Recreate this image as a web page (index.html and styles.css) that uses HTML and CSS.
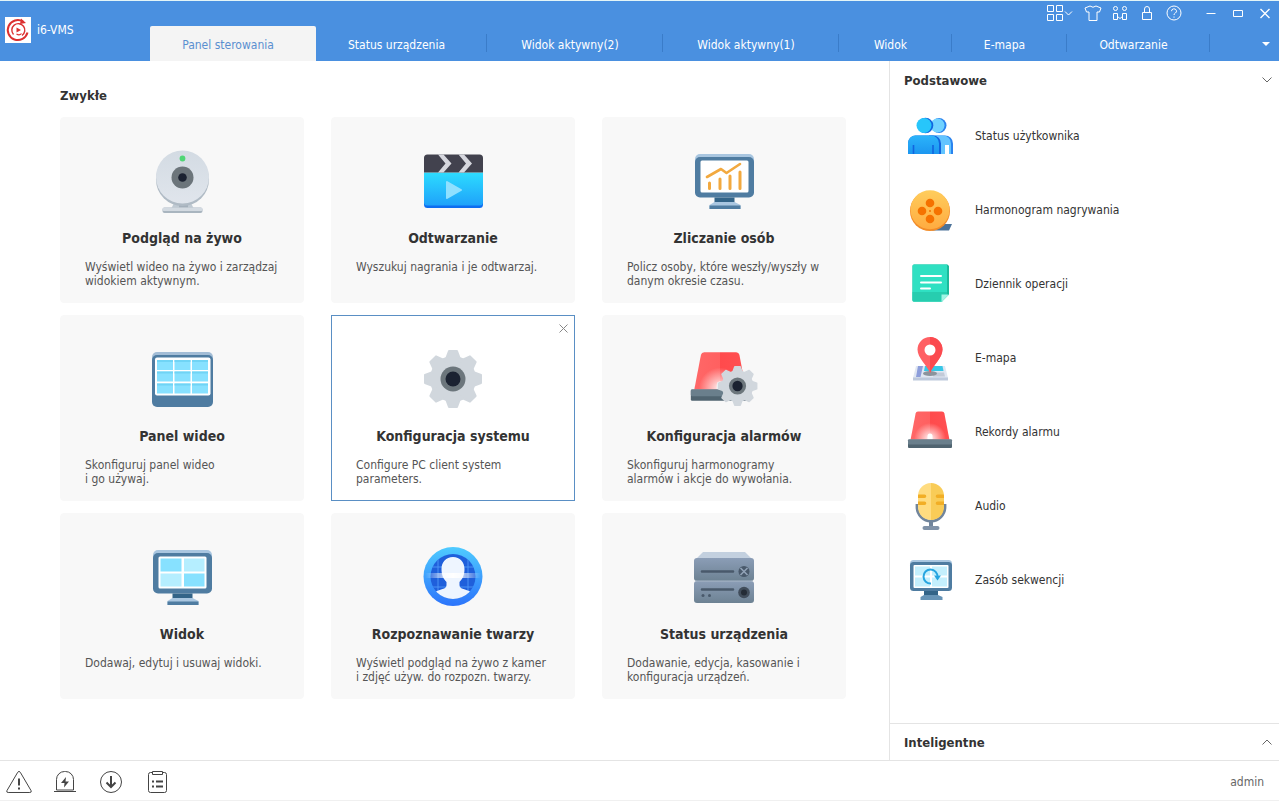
FILE: index.html
```html
<!DOCTYPE html>
<html lang="pl">
  <head>
    <meta charset="UTF-8" />
    <meta name="viewport" content="width=device-width, initial-scale=1.0" />
    <title>i6-VMS</title>
    <link rel="stylesheet" href="styles.css">
  </head>
  <body>
    <!-- shared shapes -->
    <svg class="defs" width="0" height="0" aria-hidden="true">
      <defs>
        <linearGradient id="g-cam" x1="0" y1="0" x2="0" y2="1"><stop offset="0" stop-color="#d3dbe3" /><stop offset="1" stop-color="#e0e5ec" /></linearGradient>
        <linearGradient id="g-clap" x1="0" y1="0" x2="0" y2="1"><stop offset="0" stop-color="#2ddcff" /><stop offset="1" stop-color="#1fa2fa" /></linearGradient>
        <linearGradient id="g-blue" x1="0" y1="0" x2="0" y2="1"><stop offset="0" stop-color="#4fcbff" /><stop offset="1" stop-color="#2c74fb" /></linearGradient>
        <linearGradient id="g-body" x1="0" y1="0" x2="0" y2="1"><stop offset="0" stop-color="#2bb4fa" /><stop offset="1" stop-color="#1c96f0" /></linearGradient>
        <linearGradient id="g-film" x1="0" y1="0" x2="0" y2="1"><stop offset="0" stop-color="#ffcd5c" /><stop offset="1" stop-color="#ffab40" /></linearGradient>
        <linearGradient id="g-server" x1="0" y1="0" x2="0" y2="1"><stop offset="0" stop-color="#8b9db6" /><stop offset="1" stop-color="#6d8293" /></linearGradient>
        <linearGradient id="g-scan"><stop offset="0" stop-color="#fff" stop-opacity="0" /><stop offset=".5" stop-color="#fff" /><stop offset="1" stop-color="#fff" stop-opacity="0" /></linearGradient>
        <linearGradient id="g-red"><stop offset="0" stop-color="#ff6969" /><stop offset=".5" stop-color="#ff6060" /><stop offset=".5" stop-color="#ff4a4c" /><stop offset="1" stop-color="#ff5153" /></linearGradient>
        <radialGradient id="g-glow"><stop offset="0" stop-color="#fff" stop-opacity=".95" /><stop offset="1" stop-color="#fff" stop-opacity="0" /></radialGradient>
        <clipPath id="c-face"><circle cx="32" cy="31.500" r="22.500" /></clipPath>
        <clipPath id="c-beacon"><path d="M11 3.500h24q2 0 2.400 2l5 26H3.600l5-26q.4-2 2.400-2z" /></clipPath>
        <clipPath id="c-mic"><rect x="11" y="1" width="26" height="37" rx="13" /></clipPath>
        <symbol id="gear" viewBox="0 0 64 64">
          <g fill="#d1d7dd" stroke="#d1d7dd" stroke-width="2" stroke-linejoin="round">
            <circle cx="32" cy="32" r="22" />
            <path d="M28 4h8l3 8v40l-3 8h-8l-3-8V12z" />
            <path d="M28 4h8l3 8v40l-3 8h-8l-3-8V12z" transform="rotate(45 32 32)" />
            <path d="M28 4h8l3 8v40l-3 8h-8l-3-8V12z" transform="rotate(90 32 32)" />
            <path d="M28 4h8l3 8v40l-3 8h-8l-3-8V12z" transform="rotate(135 32 32)" />
          </g>
          <circle cx="32" cy="32" r="12.500" fill="#6c767c" />
          <circle cx="32" cy="32" r="7.500" fill="#1b2231" />
        </symbol>
        <symbol id="monitor" viewBox="0 0 64 64">
          <rect x="3" y="5" width="59" height="40" rx="5" fill="#a9c6e0" />
          <rect x="3" y="8" width="59" height="40.500" rx="5" fill="#4f7ca1" />
          <rect x="8.500" y="11.500" width="48" height="32" rx="1.500" fill="#fff" />
          <path d="M22.500 48.500h20v5h-20z" fill="#336488" />
          <path d="M22.500 53h20l6 3v4H17.500v-4z" fill="#a9c6e0" />
          <path d="M17.500 56.500h31V60h-31z" fill="#4f7ca1" />
        </symbol>
        <symbol id="beacon" viewBox="0 0 48 48">
          <g clip-path="url(#c-beacon)">
            <path d="M0 0h46v33H0z" fill="url(#g-red)" />
            <circle cx="23" cy="31" r="16" fill="url(#g-glow)" />
          </g>
          <path d="M20.500 31.500V28a2.500 2.500 0 0 1 5 0v3.500z" fill="#fff" />
          <rect x="1" y="31.500" width="44" height="8.500" rx="1" fill="#506470" />
          <rect x="1" y="31.500" width="44" height="5" rx="1" fill="#6a7f8c" />
        </symbol>
      </defs>
    </svg>

    <div class="app">
      <header class="topbar">
        <div class="brand">
          <svg class="brand-logo" viewBox="0 0 26 26" aria-hidden="true">
            <path d="M0 0h26v26H0z" fill="#fff" />
            <g fill="none" stroke="#dc3030" stroke-width="2">
              <path d="M22.500 15.500A10 10 0 1 1 18 4.500" />
              <path d="M8.500 17.500A6.500 6.500 0 1 1 17 18.500" stroke-width="1.400" />
              <path d="M11.500 17q3 2 5-.5" stroke-width="1.200" />
            </g>
            <path d="M16 1.500l5 4.500-6 1zM11.500 10.500l4.500 2.500-4.500 2.500z" fill="#dc3030" />
          </svg>
          <span>i6-VMS</span>
        </div>

        <div class="topbar-main">
          <div class="tools">
            <button class="tool tool-wide" aria-label="Układ">
              <svg width="26" height="16" viewBox="0 0 26 16"><path d="M.5.500h6v6h-6zM9.500.500h6v6h-6zM.5 9.500h6v6h-6zM9.500 9.500h6v6h-6zM18 6.500l3.500 3.500L25 6.500" /></svg>
            </button>
            <button class="tool" aria-label="Skórka">
              <svg width="18" height="16" viewBox="0 0 18 16"><path d="M6 1q3 2.500 6 0l5 2-1.500 4H13v8.500H5V7H2.500L1 3z" /></svg>
            </button>
            <button class="tool" aria-label="Użytkownicy">
              <svg width="16" height="16" viewBox="0 0 16 16"><circle cx="3.500" cy="3.500" r="2" /><circle cx="12.500" cy="3.500" r="2" /><path d="M1.500 8.500h4v6h-4zM10.500 8.500h4v6h-4zM5.500 11.500L8 13.500l2.500-2" /></svg>
            </button>
            <button class="tool" aria-label="Zablokuj">
              <svg width="12" height="16" viewBox="0 0 12 16"><path d="M1.500 7.500h9v7h-9zM3.500 7.500V4a2.500 2.500 0 0 1 5 0v3.500" /></svg>
            </button>
            <button class="tool" aria-label="Pomoc">
              <svg width="16" height="16" viewBox="0 0 16 16"><circle cx="8" cy="8" r="7" /><path d="M5.500 6.200a2.500 2.300 0 1 1 3.800 1.900Q8 8.800 8 10M8 11.500v1.200" /></svg>
            </button>
            <div class="window-buttons">
              <button class="tool" aria-label="Minimalizuj">
                <svg width="10" height="16" viewBox="0 0 10 16"><path d="M.5 8.500h9" /></svg>
              </button>
              <button class="tool" aria-label="Maksymalizuj">
                <svg width="10" height="16" viewBox="0 0 10 16"><path d="M.5 5.500h9v6h-9z" /></svg>
              </button>
              <button class="tool" aria-label="Zamknij">
                <svg width="10" height="16" viewBox="0 0 10 16"><path d="M.5 4l9 9M9.500 4l-9 9" stroke-width="1.400" /></svg>
              </button>
            </div>
          </div>
          <nav class="tabs">
            <button class="tab active">Panel sterowania</button>
            <button class="tab">Status urządzenia</button>
            <button class="tab">Widok aktywny(2)</button>
            <button class="tab">Widok aktywny(1)</button>
            <button class="tab">Widok</button>
            <button class="tab">E-mapa</button>
            <button class="tab">Odtwarzanie</button>
            <button class="tab-more" aria-label="Więcej kart">
              <svg width="8" height="4" viewBox="0 0 8 4"><path d="M0 0h8L4 4z" fill="#fff" /></svg>
            </button>
          </nav>
        </div>
      </header>

      <div class="content">
        <main class="panel">
          <h2>Zwykłe</h2>
          <div class="cards">
            <article class="card">
              <svg class="card-icon" viewBox="0 0 64 64">
                <path d="M24 54h17l3 6H21z" fill="#c0cad3" />
                <path d="M29 54h9v6h-9z" fill="#a4b0bb" />
                <rect x="12.500" y="58.500" width="40" height="5.500" rx="2" fill="#a9b5bf" />
                <rect x="12.500" y="58.500" width="40" height="3.500" rx="1.500" fill="#d3dae1" />
                <circle cx="32.500" cy="30.500" r="26.500" fill="#b0bbc5" />
                <circle cx="32.500" cy="28" r="26.500" fill="url(#g-cam)" />
                <circle cx="32.500" cy="28.500" r="11" fill="#6c757b" />
                <circle cx="32.500" cy="28.500" r="4.300" fill="#1b2231" />
                <circle cx="32.500" cy="9.500" r="2.900" fill="#4fd675" />
              </svg>
              <h3>Podgląd na żywo</h3>
              <p>Wyświetl wideo na żywo i zarządzaj<br>widokiem aktywnym.</p>
            </article>
            <article class="card">
              <svg class="card-icon" viewBox="0 0 64 64">
                <path d="M3 24h59v31.500a3.500 3.500 0 0 1-3.500 3.500h-52A3.500 3.500 0 0 1 3 55.500z" fill="#0d6df0" />
                <path d="M3 23.500h59V54a3 3 0 0 1-3 2.500H6A3 3 0 0 1 3 54z" fill="url(#g-clap)" />
                <path d="M3 23.500V9a3.500 3.500 0 0 1 3.500-3.500h52A3.500 3.500 0 0 1 62 9v14.500z" fill="#42424e" />
                <path d="M17 5.500h5.500l8 9-8 9H17l7.500-9zM37.500 5.500H43l8 9-8 9h-5.500l7.500-9z" fill="#d6d7de" />
                <path d="M26 33l14 8-14 8z" fill="#8fe0ff" stroke="#8fe0ff" stroke-width="2" stroke-linejoin="round" />
              </svg>
              <h3>Odtwarzanie</h3>
              <p>Wyszukuj nagrania i je odtwarzaj.</p>
            </article>
            <article class="card">
              <svg class="card-icon" viewBox="0 0 64 64">
                <use href="#monitor" width="64" height="64" />
                <g fill="none" stroke="#f2a93f" stroke-linecap="round" stroke-linejoin="round">
                  <path d="M15 28l14-8 5.500 4L48 15" stroke-width="2.600" />
                  <path d="M17.500 34v5.500M28 30v9.500M38 27v12.500M48 23v16.500" stroke-width="3" />
                </g>
              </svg>
              <h3>Zliczanie osób</h3>
              <p>Policz osoby, które weszły/wyszły w<br>danym okresie czasu.</p>
            </article>
            <article class="card">
              <svg class="card-icon" viewBox="0 0 64 64">
                <rect x="2" y="5" width="61" height="50" rx="5" fill="#a3bdd6" />
                <rect x="2" y="8" width="61" height="52" rx="5" fill="#4f7ca1" />
                <rect x="5" y="10.500" width="55.500" height="38" rx="2" fill="#fff" />
                <path d="M7 13h16v10H7zM24.500 13h16v10h-16zM42 13h16v10H42zM7 24.500h16v10H7zM24.500 24.500h16v10h-16zM42 24.500h16v10H42zM7 36.500h16v10H7zM24.500 36.500h16v10h-16zM42 36.500h16v10H42z" fill="#87e1ff" />
                <path d="M7 13h16v2H7zM24.500 13h16v2h-16zM42 13h16v2H42zM7 24.500h16v2H7zM24.500 24.500h16v2h-16zM42 24.500h16v2H42zM7 36.500h16v2H7zM24.500 36.500h16v2h-16zM42 36.500h16v2H42z" fill="#70d4f5" />
              </svg>
              <h3>Panel wideo</h3>
              <p>Skonfiguruj panel wideo<br>i go używaj.</p>
            </article>
            <article class="card selected">
              <button class="card-close" aria-label="Usuń">
                <svg width="9" height="9" viewBox="0 0 9 9"><path d="M.5.500l8 8M8.500.500l-8 8" fill="none" stroke="#888" /></svg>
              </button>
              <svg class="card-icon" viewBox="0 0 64 64"><use href="#gear" width="64" height="64" /></svg>
              <h3>Konfiguracja systemu</h3>
              <p>Configure PC client system<br>parameters.</p>
            </article>
            <article class="card">
              <svg class="card-icon" viewBox="0 0 64 64">
                <use href="#beacon" x="-2.500" y="0.500" width="64" height="64" />
                <use href="#gear" x="23.500" y="17" width="44" height="44" />
              </svg>
              <h3>Konfiguracja alarmów</h3>
              <p>Skonfiguruj harmonogramy<br>alarmów i akcje do wywołania.</p>
            </article>
            <article class="card">
              <svg class="card-icon" viewBox="0 0 64 64">
                <use href="#monitor" width="64" height="64" />
                <path d="M10.500 13.500h21v13h-21zM34 28.500h20.500v13H34z" fill="#87e1ff" />
                <path d="M34 13.500h20.500v13H34zM10.500 28.500h21v13h-21z" fill="#b5eeff" />
              </svg>
              <h3>Widok</h3>
              <p>Dodawaj, edytuj i usuwaj widoki.</p>
            </article>
            <article class="card">
              <svg class="card-icon" viewBox="0 0 64 64">
                <circle cx="32" cy="31.500" r="29.500" fill="url(#g-blue)" />
                <circle cx="32" cy="31.500" r="22.500" fill="#1f5fdb" />
                <g clip-path="url(#c-face)">
                  <path d="M9 22h46M9 42h46M17 8v48M47 8v48" stroke="#4b93f5" />
                  <path d="M32 12c7 0 11.500 5 11.500 12 0 6-2 10-5 13v3q0 3 4 4l7 2.500V60h-35V46.500l7-2.500q4-1 4-4v-3c-3-3-5-7-5-13 0-7 4.500-12 11.500-12z" fill="#eef5ff" />
                </g>
                <path d="M4 28h56v5H4z" fill="url(#g-scan)" />
              </svg>
              <h3>Rozpoznawanie twarzy</h3>
              <p>Wyświetl podgląd na żywo z kamer<br>i zdjęć używ. do rozpozn. twarzy.</p>
            </article>
            <article class="card">
              <svg class="card-icon" viewBox="0 0 64 64">
                <path d="M11 7h42l9 9H2z" fill="#c3d0df" />
                <rect x="2" y="13" width="60" height="23" rx="3" fill="url(#g-server)" />
                <rect x="2" y="36" width="60" height="22" rx="3" fill="url(#g-server)" />
                <path d="M4 36h56" stroke="#a9b7c8" />
                <path d="M10 26.500h31M10 44.500h31" stroke="#49596b" stroke-width="2.600" stroke-linecap="round" />
                <circle cx="52" cy="26.500" r="5.500" fill="#49596b" />
                <path d="M48.500 23l7 7M55.500 23l-7 7" stroke="#93a4b8" stroke-width="1.500" />
                <circle cx="52" cy="47.500" r="5.800" fill="#414d5b" />
                <circle cx="52" cy="47.500" r="3" fill="#242c36" />
                <circle cx="11" cy="50.500" r="1.500" fill="#49596b" />
                <circle cx="17.500" cy="50.500" r="1.500" fill="#49596b" />
              </svg>
              <h3>Status urządzenia</h3>
              <p>Dodawanie, edycja, kasowanie i<br>konfiguracja urządzeń.</p>
            </article>
          </div>
        </main>

        <aside class="sidebar">
          <button class="section-toggle">
            <span>Podstawowe</span>
            <svg width="10" height="6" viewBox="0 0 10 6"><path d="M.5.500L5 5 9.500.500" fill="none" stroke="#666" /></svg>
          </button>
          <ul class="menu">
            <li>
              <button class="menu-item">
                <svg viewBox="0 0 48 48">
                  <circle cx="32" cy="13.500" r="7.500" fill="#2a83ee" />
                  <circle cx="30.500" cy="13.500" r="7" fill="#70d2ff" />
                  <path d="M22 42V23.500h16a8 8 0 0 1 8 8V42z" fill="#2a83ee" />
                  <path d="M22 42V23.500h14a8 8 0 0 1 8 8V42z" fill="#62c4ff" />
                  <path d="M38 42v-9h4v9z" fill="#fff" />
                  <circle cx="18.500" cy="13.500" r="7.800" fill="#1165df" />
                  <circle cx="17" cy="13.500" r="7.500" fill="#27c6fb" />
                  <path d="M1 42V31a7.500 7.500 0 0 1 7.500-7.500H26a8 8 0 0 1 8 8V42z" fill="#1165df" />
                  <path d="M1 42V31a7.500 7.500 0 0 1 7.500-7.500H24a8 8 0 0 1 8 8V42z" fill="url(#g-body)" />
                  <path d="M6.500 42v-9M26 42v-9" stroke="#1165df" stroke-width="1.600" />
                </svg>
                <span>Status użytkownika</span>
              </button>
            </li>
            <li>
              <button class="menu-item">
                <svg viewBox="0 0 48 48">
                  <path d="M36 38h9l-3 6.500H24z" fill="#4d7399" />
                  <circle cx="23" cy="25" r="20" fill="#f28c28" />
                  <circle cx="23" cy="23.800" r="19.500" fill="url(#g-film)" />
                  <g fill="#f57200"><circle cx="23" cy="17" r="4.300" /><circle cx="15" cy="25" r="4.300" /><circle cx="31" cy="25" r="4.300" /><circle cx="23" cy="33" r="4.300" /><circle cx="23" cy="25" r="1" /></g>
                </svg>
                <span>Harmonogram nagrywania</span>
              </button>
            </li>
            <li>
              <button class="menu-item">
                <svg viewBox="0 0 48 48">
                  <path d="M7 4.500h33.500L42 6v28.500l-7 7H7Q5.500 41.500 5.500 40V6Q5.500 4.500 7 4.500z" fill="#1db99a" />
                  <path d="M7 4.500h33v30l-5 7H7Q5.500 41.500 5.500 40V6Q5.500 4.500 7 4.500z" fill="#2fe0c2" />
                  <path d="M5.500 32H40v2.500l-5 7H7Q5.500 41.500 5.500 40z" fill="#27cdaf" />
                  <path d="M34.500 34.500H42l-7.500 7.500z" fill="#a2f5e5" />
                  <path d="M14 16h20M14 22.500h20M14 28.500h9" stroke="#fff" stroke-width="2" stroke-linecap="round" />
                </svg>
                <span>Dziennik operacji</span>
              </button>
            </li>
            <li>
              <button class="menu-item">
                <svg viewBox="0 0 48 48">
                  <path d="M9 32h29l3 12H6z" fill="#e1e7f2" />
                  <path d="M6 43.500h35v3H6z" fill="#bec9dc" />
                  <path d="M11 32h5l-2.500 11H9z" fill="#8d9edb" />
                  <path d="M18 32h17.500l1 5H17z" fill="#37c7e6" />
                  <path d="M26 38.500h11l1 4H26z" fill="#c2cad8" />
                  <ellipse cx="23" cy="39.500" rx="7" ry="2.400" fill="#8c939c" />
                  <path d="M23 3a12.500 12.500 0 0 1 12.500 12.500C35.500 24 26 31 23 39c-3-8-12.500-15-12.500-23.500A12.500 12.500 0 0 1 23 3z" fill="#ff6064" />
                  <path d="M23 3a12.500 12.500 0 0 1 12.500 12.500C35.500 24 26 31 23 39z" fill="#fb4a4f" />
                  <circle cx="23" cy="16" r="5.500" fill="#fff" />
                </svg>
                <span>E-mapa</span>
              </button>
            </li>
            <li>
              <button class="menu-item">
                <svg viewBox="0 0 48 48"><use href="#beacon" width="48" height="48" /></svg>
                <span>Rekordy alarmu</span>
              </button>
            </li>
            <li>
              <button class="menu-item">
                <svg viewBox="0 0 48 48">
                  <path d="M10 22v3a14 14 0 0 0 28 0v-3M24 39v6" fill="none" stroke="#71859c" stroke-width="2.800" />
                  <path d="M22 40h4v5h-4z" fill="#71859c" />
                  <rect x="15.500" y="44" width="17" height="4" rx="2" fill="#8092a8" />
                  <g clip-path="url(#c-mic)">
                    <path d="M11 0h13v38H11z" fill="#ffdc80" />
                    <path d="M24 0h13v38H24z" fill="#f9cc57" />
                    <path d="M11 12.500h6.500a1.800 1.800 0 0 1 0 3.600H11zM11 19.500h6.500a1.800 1.800 0 0 1 0 3.600H11zM37 12.500h-6.500a1.800 1.800 0 0 0 0 3.600H37zM37 19.500h-6.500a1.800 1.800 0 0 0 0 3.600H37z" fill="#f2ae25" />
                  </g>
                </svg>
                <span>Audio</span>
              </button>
            </li>
            <li>
              <button class="menu-item">
                <svg viewBox="0 0 48 48">
                  <rect x="3" y="4" width="42" height="28" rx="3.500" fill="#a9c6e0" />
                  <rect x="3" y="6" width="42" height="29" rx="3.500" fill="#4f7ca1" />
                  <rect x="6.500" y="9" width="35" height="23" rx="1" fill="#fff" />
                  <path d="M8 10.500h15v9H8zM25 10.500h15v9H25zM8 21.500h15v9H8zM25 21.500h15v9H25z" fill="#c4effd" />
                  <path d="M17 35h14v4H17z" fill="#336488" />
                  <path d="M17 39h14l4.500 2v3h-22v-3z" fill="#6693b6" />
                  <path d="M24 27.500A7 7 0 1 1 30.500 21" fill="none" stroke="#27a5e0" stroke-width="2" />
                  <path d="M27 19.500h7l-3.500 5z" fill="#27a5e0" />
                </svg>
                <span>Zasób sekwencji</span>
              </button>
            </li>
          </ul>
          <button class="section-toggle section-bottom">
            <span>Inteligentne</span>
            <svg width="10" height="6" viewBox="0 0 10 6"><path d="M.5 5.500L5 1l4.500 4.500" fill="none" stroke="#666" /></svg>
          </button>
        </aside>
      </div>

      <footer class="statusbar">
        <button class="status-button" aria-label="Ostrzeżenia">
          <svg viewBox="0 0 26 24"><path d="M11.700 2.300q1.300-2 2.600 0l10.800 18.400q.7 1.800-1.300 1.800H2.200q-2 0-1.300-1.800z" /><path d="M13 8.500v7M13 17.500v2" stroke-width="2" /></svg>
        </button>
        <button class="status-button" aria-label="Alarmy">
          <svg viewBox="0 0 26 24"><path d="M4.500 20V9.500a8 8 0 0 1 8-8h1a8 8 0 0 1 8 8V20zM2 21.500h22" /><path d="M14 7l-5 6h3.500l-.5 4.500 5-6h-3.500z" fill="#444" stroke="none" /></svg>
        </button>
        <button class="status-button" aria-label="Pobieranie">
          <svg viewBox="0 0 26 24"><circle cx="13" cy="12" r="10.500" /><path d="M13 6v11M8.500 12.500L13 17l4.500-4.500" stroke-width="2" /></svg>
        </button>
        <button class="status-button" aria-label="Zadania">
          <svg viewBox="0 0 26 24"><path d="M8.500 2.500h-2q-2 0-2 2v16q0 2 2 2h14q2 0 2-2v-16q0-2-2-2h-2M8.500 1.500h10v3h-10z" /><path d="M8 11.500h2M12 11.500h7M8 16.500h2M12 16.500h7" stroke-width="2" /></svg>
        </button>
        <span class="user">admin</span>
      </footer>
    </div>
  </body>
</html>
```

FILE: styles.css
```css
* {
  box-sizing: border-box;
}

body {
  margin: 0;
  font-family: "DejaVu Sans Condensed", "Open Sans", sans-serif;
  font-size: 12px;
  color: #333;
  background-color: #fff;
}

button {
  margin: 0;
  padding: 0;
  border: none;
  background: none;
  font: inherit;
  color: inherit;
  cursor: pointer;
}

h2,
h3,
p,
ul {
  margin: 0;
  padding: 0;
}

.defs {
  position: absolute;
}

.app {
  display: flex;
  flex-direction: column;
  min-height: 100vh;
}

/* top bar */
.topbar {
  display: flex;
  height: 61px;
  border-top: 1px solid #e4f5f7;
  background-color: #4a90e0;
  color: #fff;
}

.brand {
  display: flex;
  align-items: center;
  gap: 6px;
  width: 150px;
  padding: 0 0 2px 5px;
}

.brand-logo {
  width: 26px;
  height: 26px;
}

.topbar-main {
  flex: 1;
  display: flex;
  flex-direction: column;
}

.tools {
  display: flex;
  justify-content: flex-end;
  height: 25px;
  padding: 0 1px 2px 0;
}

.tool {
  display: flex;
  align-items: center;
  justify-content: center;
  width: 27px;
}

.tool-wide {
  width: 38px;
}

.tool svg {
  fill: none;
  stroke: #fff;
}

.window-buttons {
  display: flex;
  margin-left: 10px;
}

.tabs {
  flex: 1;
  display: grid;
  grid-template-columns: 166px 171px 176px 176px 113px 115px 143px 1fr;
}

.tab {
  position: relative;
  padding: 2px 10px 0 0;
  white-space: nowrap;
}

.tab:not(.active)::after {
  content: "";
  position: absolute;
  right: 0;
  top: 8px;
  bottom: 9px;
  border-right: 1px solid #3a7cc9;
}

.tab.active {
  border-radius: 2px 2px 0 0;
  background-color: #f4f4f4;
  color: #5a8fd0;
}

.tab-more {
  display: flex;
  align-items: center;
  justify-content: flex-end;
  padding-right: 9px;
}

/* main area */
.content {
  flex: 1;
  display: flex;
}

.panel {
  flex: 1;
  padding: 26px 43px 20px 60px;
}

.panel h2 {
  margin-bottom: 12px;
  font-size: 13px;
  line-height: 18px;
}

.cards {
  display: grid;
  grid-template-columns: repeat(3, 1fr);
  gap: 12px 27px;
}

.card {
  position: relative;
  display: flex;
  flex-direction: column;
  min-height: 186px;
  padding: 31px 0 12px 24px;
  border: 1px solid #f8f8f8;
  border-radius: 4px;
  background-color: #f8f8f8;
}

.card.selected {
  border-color: #5a8fc4;
  border-radius: 0;
  background-color: #fff;
}

.card-icon {
  align-self: center;
  width: 64px;
  height: 64px;
  margin-right: 24px;
  overflow: visible;
}

.card h3 {
  margin: 15px 24px 12px 0;
  font-size: 14px;
  line-height: 20px;
  text-align: center;
}

.card p {
  line-height: 14px;
  color: #555;
  white-space: nowrap;
}

.card-close {
  position: absolute;
  top: 7px;
  right: 5px;
  display: flex;
  width: 11px;
  height: 11px;
  align-items: center;
  justify-content: center;
}

/* right side */
.sidebar {
  display: flex;
  flex-direction: column;
  width: 390px;
  border-left: 1px solid #e4e4e4;
}

.section-toggle {
  display: flex;
  align-items: center;
  justify-content: space-between;
  height: 38px;
  padding: 0 7px 0 14px;
  font-size: 13px;
  font-weight: bold;
}

.section-bottom {
  height: 37px;
  margin-top: auto;
  border-top: 1px solid #e4e4e4;
}

.menu {
  list-style: none;
}

.menu-item {
  display: flex;
  align-items: center;
  gap: 20px;
  width: 100%;
  height: 74px;
  padding-left: 17px;
  text-align: left;
}

.menu-item svg {
  width: 48px;
  height: 48px;
}

/* bottom bar */
.statusbar {
  display: flex;
  align-items: center;
  gap: 20px;
  height: 41px;
  padding: 2px 15px 0 6px;
  border-top: 1px solid #e4e4e4;
  border-bottom: 1px solid #f0f0f0;
}

.status-button {
  display: flex;
}

.status-button svg {
  width: 26px;
  height: 24px;
  fill: none;
  stroke: #444;
}

.user {
  margin-left: auto;
  color: #666;
}
```
